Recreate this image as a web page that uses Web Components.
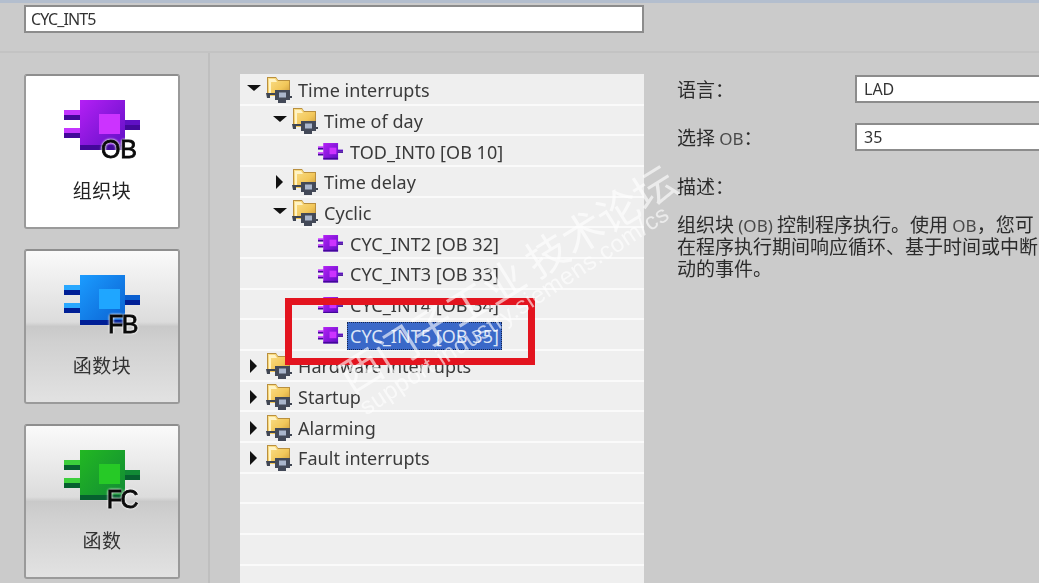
<!DOCTYPE html>
<html lang="zh">
<head>
<meta charset="utf-8">
<title>Add new block</title>
<style>
    html, body { margin: 0; height: 100%; background: #cbcbcb; overflow: hidden; }
    body { font-family: "Noto Sans", "Noto Sans CJK SC", sans-serif; color: #2b2b2b; }
</style>
</head>
<body>
<add-block-dialog></add-block-dialog>

<script>
// ====================================================================
// ** Shared drawing helpers **
// ====================================================================
const BLOCK_COLORS = {
    OB: { hi: '#b41ff5', lo: '#5f10c4', edge: '#43089a', pin: '#c435ff', core: '#cc33ff' },
    FB: { hi: '#1b9cff', lo: '#0a5fd0', edge: '#001f96', pin: '#2aa8ff', core: '#1fa6ff' },
    FC: { hi: '#22b822', lo: '#118a35', edge: '#06602f', pin: '#3ccf3c', core: '#26c926' }
};

const blockSvg = (kind, w, h) => {
    const c = BLOCK_COLORS[kind];
    return `<svg width="${w}" height="${h}" viewBox="0 0 76 50" aria-hidden="true">
        <defs><linearGradient id="g" x1="0" y1="0" x2="1" y2="1">
            <stop offset="0" stop-color="${c.hi}"/><stop offset="1" stop-color="${c.lo}"/>
        </linearGradient></defs>
        <path d="M0 10h17v5H0z" fill="${c.pin}"/><path d="M0 15h17v5H0z" fill="${c.edge}"/>
        <path d="M0 28h17v5H0z" fill="${c.pin}"/><path d="M0 33h17v5H0z" fill="${c.edge}"/>
        <path d="M60 20h16v5H60z" fill="${c.lo}"/><path d="M60 25h16v5H60z" fill="${c.edge}"/>
        <rect x="16" y="0" width="45" height="50" fill="url(#g)"/>
        <rect x="16" y="45" width="45" height="5" fill="${c.edge}"/>
        <rect x="35" y="14" width="21" height="20" fill="${c.core}"/>
    </svg>`;
};

const folderSvg = () => `<svg width="26" height="26" viewBox="0 0 26 26" aria-hidden="true">
    <defs><linearGradient id="f" x1="0" y1="0" x2="1" y2="1">
        <stop offset="0" stop-color="#fbe08c"/><stop offset=".6" stop-color="#f2c75a"/><stop offset="1" stop-color="#c99838"/>
    </linearGradient></defs>
    <path d="M1 0h9l2 3h12v16H1z" fill="#b98f3e"/>
    <path d="M2 1h8l2 3h11v15H2z" fill="url(#f)"/>
    <path d="M3 2h6l2 3H5v13H3z" fill="#fff3c4"/>
    <path d="M0 16h9v2H4v3H1z" fill="#3f4552"/>
    <path d="M9 13h15v10H20v3H12v-3H9z" fill="#434958"/>
    <rect x="13" y="15.500" width="7" height="5" fill="#aab6cc"/>
    <path d="M24 19h2v2h-2z" fill="#3f4552"/>
</svg>`;

// ====================================================================
// ** Web Component: <block-button> **
// ====================================================================
class BlockButton extends HTMLElement {
    constructor() {
        super();
        this.attachShadow({ mode: 'open' });
    }

    connectedCallback() {
        const kind = this.getAttribute('kind');
        this.shadowRoot.innerHTML = `
            <style>
                :host {
                    display: flex;
                    flex-direction: column;
                    align-items: center;
                    box-sizing: border-box;
                    width: 156px;
                    height: 155px;
                    padding-top: 24px;
                    border: 2px solid #9a9a9a;
                    border-top-color: #8e8e8e;
                    border-radius: 3px;
                    background: linear-gradient(#fafafa 0, #dcdcdc 47%, #c9c9c9 50%, #d0d0d0 60%, #e2e2e2 100%);
                    font: 19px/24px "Noto Sans CJK SC", sans-serif;
                    letter-spacing: .5px;
                    color: #333;
                }
                :host([active]) { background: #fff; color: #222; }
                .icon { position: relative; width: 76px; height: 50px; margin-bottom: 28px; }
                svg { display: block; }
                .tag {
                    position: absolute;
                    right: 3px;
                    top: 38px;
                    font: 25px/22px "Liberation Sans", sans-serif;
                    letter-spacing: -1.500px;
                    color: #0a0a0a;
                    -webkit-text-stroke: .8px #0a0a0a;
                    text-shadow: 0 0 3px #fff, 0 0 3px #fff, 0 0 2px #fff;
                }
                :host([kind="OB"]) .tag { letter-spacing: 0; }
            </style>
            <div class="icon">${blockSvg(kind, 76, 50)}<span class="tag">${kind}</span></div>
            <slot></slot>
        `;
    }
}
customElements.define('block-button', BlockButton);

// ====================================================================
// ** Web Component: <tree-row> **
// ====================================================================
class TreeRow extends HTMLElement {
    constructor() {
        super();
        this.attachShadow({ mode: 'open' });
    }

    connectedCallback() {
        const level = Number(this.getAttribute('level') || 0);
        const toggle = this.getAttribute('toggle');
        const icon = this.getAttribute('icon');
        let arrow = '';
        if (toggle === 'open') arrow = '<path d="M0 2h14L7 8z" fill="#111"/>';
        if (toggle === 'closed') arrow = '<path d="M3 0l7 7-7 7z" fill="#111"/>';
        this.shadowRoot.innerHTML = `
            <style>
                :host {
                    display: flex;
                    align-items: center;
                    box-sizing: border-box;
                    height: 30.67px;
                    padding: 2px 0 0 ${7 + level * 26}px;
                    border-bottom: 2px solid #fafafa;
                    font: 18px/24px "Noto Sans", sans-serif;
                    letter-spacing: .05px;
                    color: #3a3a3a;
                    white-space: nowrap;
                }
                .arrow { width: 14px; height: 14px; margin-right: 5px; flex: none; }
                .icon { width: 26px; flex: none; margin-right: 6px; display: flex; align-items: center; }
                svg { display: block; }
                :host([selected]) .label {
                    margin-left: -3px;
                    padding: 2px 3px;
                    background: #3a68c8;
                    color: #dbe4f6;
                    outline: 1px dotted #16264f;
                    outline-offset: -1px;
                }
            </style>
            ${icon ? `<svg class="arrow" viewBox="0 0 14 14" aria-hidden="true">${arrow}</svg>
            <span class="icon">${icon === 'folder' ? folderSvg() : blockSvg('OB', 25, 16.500)}</span>` : ''}
            <span class="label"><slot></slot></span>
        `;
    }
}
customElements.define('tree-row', TreeRow);

// ====================================================================
// ** Web Component: <field-row> **
// ====================================================================
class FieldRow extends HTMLElement {
    constructor() {
        super();
        this.attachShadow({ mode: 'open' });
    }

    connectedCallback() {
        this.shadowRoot.innerHTML = `
            <style>
                :host { display: flex; align-items: center; height: 28px; white-space: nowrap; }
                .name { width: 178px; flex: none; }
                .box {
                    box-sizing: border-box;
                    width: 220px;
                    height: 28px;
                    flex: none;
                    padding-left: 7px;
                    background: #fff;
                    border: 2px solid #8c8c8c;
                    border-right: 0;
                    font: 16px/24px "Noto Sans", sans-serif;
                    color: #333;
                }
            </style>
            <span class="name"><slot name="label"></slot></span>
            <span class="box"><slot></slot></span>
        `;
    }
}
customElements.define('field-row', FieldRow);

// ====================================================================
// ** Web Component: <add-block-dialog> **
// ====================================================================
class AddBlockDialog extends HTMLElement {
    constructor() {
        super();
        this.attachShadow({ mode: 'open' });
    }

    connectedCallback() {
        const rows = [
            [0, 'open', 'folder', 'Time interrupts'],
            [1, 'open', 'folder', 'Time of day'],
            [2, '', 'ob', 'TOD_INT0 [OB 10]'],
            [1, 'closed', 'folder', 'Time delay'],
            [1, 'open', 'folder', 'Cyclic'],
            [2, '', 'ob', 'CYC_INT2 [OB 32]'],
            [2, '', 'ob', 'CYC_INT3 [OB 33]'],
            [2, '', 'ob', 'CYC_INT4 [OB 34]'],
            [2, '', 'ob', 'CYC_INT5 [OB 35]', true],
            [0, 'closed', 'folder', 'Hardware interrupts'],
            [0, 'closed', 'folder', 'Startup'],
            [0, 'closed', 'folder', 'Alarming'],
            [0, 'closed', 'folder', 'Fault interrupts'],
            [0], [0], [0], [0]
        ];
        const rowHtml = rows.map(([level, toggle, icon, text, selected]) =>
            `<tree-row level="${level}" toggle="${toggle || ''}" ${icon ? `icon="${icon}"` : ''} ${selected ? 'selected' : ''}>${text || ''}</tree-row>`
        ).join('');

        this.shadowRoot.innerHTML = `
            <style>
                :host {
                    display: flex;
                    flex-direction: column;
                    position: relative;
                    width: 1039px;
                    height: 583px;
                    overflow: hidden;
                    background: #cbcbcb;
                }
                .soft { display: flex; flex-direction: column; flex: 1; min-height: 0; filter: blur(.5px); }
                .strip { height: 3px; background: #b3bece; flex: none; }
                .name-bar {
                    height: 50px;
                    flex: none;
                    box-sizing: border-box;
                    padding: 2px 0 0 24px;
                    border-bottom: 2px solid #c3c3c3;
                }
                .name-box {
                    box-sizing: border-box;
                    width: 620px;
                    height: 28px;
                    padding-left: 5px;
                    background: #fff;
                    border: 2px solid #8c8c8c;
                    font: 16px/24px "Noto Sans", sans-serif;
                    letter-spacing: -.9px;
                    color: #333;
                }
                .main { display: flex; flex: 1; min-height: 0; }
                .side {
                    width: 210px;
                    flex: none;
                    box-sizing: border-box;
                    display: flex;
                    flex-direction: column;
                    gap: 20px;
                    padding: 21px 0 0 24px;
                    border-right: 2px solid #bfbfbf;
                }
                .tree {
                    width: 404px;
                    flex: none;
                    margin: 21px 0 0 30px;
                    padding-top: 1px;
                    background: #efefef;
                    overflow: hidden;
                }
                .info {
                    flex: 1;
                    min-width: 0;
                    box-sizing: border-box;
                    padding: 22px 0 0 33px;
                    font: 19px/22px "Noto Sans CJK SC", sans-serif;
                    color: #2b2b2b;
                    display: flex;
                    flex-direction: column;
                }
                .latin { font-family: "Noto Sans", sans-serif; font-size: 17px; line-height: 1; color: #4a4a4a; }
                field-row + field-row { margin-top: 20px; }
                .desc { margin-top: 24px; }
                p { margin: 16px 0 0; white-space: nowrap; }
                .frame {
                    position: absolute;
                    left: 285px;
                    top: 298px;
                    width: 250px;
                    height: 67px;
                    box-sizing: border-box;
                    border: 7px solid #e3141f;
                }
                .mark {
                    position: absolute;
                    white-space: nowrap;
                    color: rgba(255, 255, 255, .62);
                    transform-origin: 0 50%;
                }
                .mark.big {
                    left: 342px;
                    top: 358px;
                    transform: rotate(-32deg);
                    font: 42px/44px "Noto Sans CJK SC", sans-serif;
                }
                .mark.small {
                    left: 362px;
                    top: 396px;
                    transform: rotate(-33deg);
                    font: 24px/26px "Liberation Sans", sans-serif;
                    letter-spacing: .5px;
                }
            </style>
            <div class="soft">
                <div class="strip"></div>
                <div class="name-bar"><div class="name-box">CYC_INT5</div></div>
                <div class="main">
                    <div class="side">
                        <block-button kind="OB" active>组织块</block-button>
                        <block-button kind="FB">函数块</block-button>
                        <block-button kind="FC">函数</block-button>
                    </div>
                    <div class="tree">${rowHtml}</div>
                    <div class="info">
                        <field-row><span slot="label">语言：</span>LAD</field-row>
                        <field-row><span slot="label">选择 <span class="latin">OB</span>：</span>35</field-row>
                        <div class="desc">描述：</div>
                        <p>组织块 <span class="latin">(OB)</span> 控制程序执行。使用 <span class="latin">OB</span>，您可<br>在程序执行期间响应循环、基于时间或中断<br>动的事件。</p>
                    </div>
                </div>
            </div>
            <div class="frame"></div>
            <div class="mark big">西门子工业 技术论坛</div>
            <div class="mark small">support.industry.siemens.com/cs</div>
        `;
    }
}
customElements.define('add-block-dialog', AddBlockDialog);
</script>
</body>
</html>
